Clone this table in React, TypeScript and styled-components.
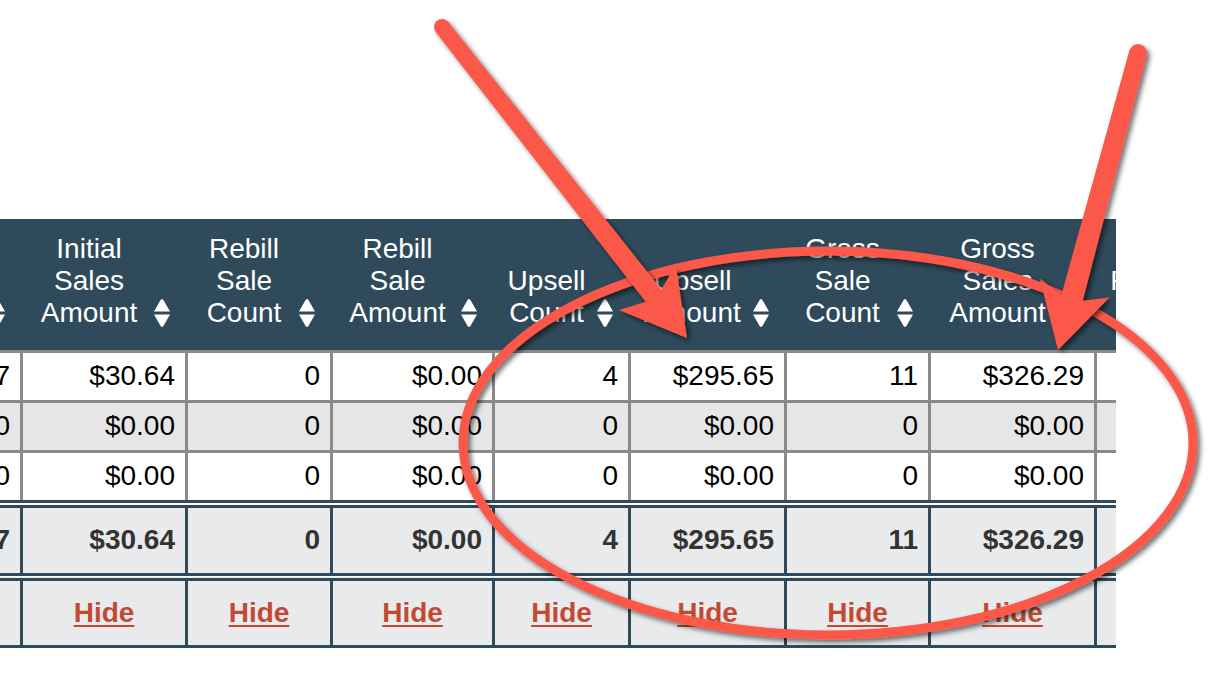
import React from "react";
import styled, { createGlobalStyle } from "styled-components";

const headerBg = "#2f4a5a";
const gridGray = "#8a8a8a";
const markRed = "#fc5848";

const GlobalStyle = createGlobalStyle`
  html, body {
    margin: 0;
    padding: 0;
    background: #ffffff;
  }
  body {
    font-family: "Liberation Sans", Arial, Helvetica, sans-serif;
  }
`;

const Page = styled.div`
  position: relative;
  width: 1216px;
  height: 676px;
  overflow: hidden;
  padding-top: 219px;
  box-sizing: border-box;
`;

const TableClip = styled.div`
  width: 1116px;
  overflow: hidden;
`;

const Table = styled.table`
  table-layout: fixed;
  border-collapse: collapse;
  width: 1344px;
  margin-left: -100px;
  font-size: 28px;
  line-height: 32px;
`;

const HeadCell = styled.th`
  background: ${headerBg};
  color: #ffffff;
  font-weight: normal;
  padding: 14px 15px 21px 5px;
  vertical-align: bottom;
  border: none;
`;

const HeadInner = styled.div`
  display: flex;
  align-items: flex-end;
`;

const HeadLabel = styled.span`
  flex: 1;
  text-align: center;
  white-space: pre-line;
`;

const SortGlyph = styled.svg`
  flex: none;
  display: block;
  width: 20px;
  height: 32px;
`;

const DataRow = styled.tr<{ $alt?: boolean }>`
  background: ${(p) => (p.$alt ? "#e6e6e6" : "#ffffff")};
`;

const DataCell = styled.td`
  border: 3px solid ${gridGray};
  padding: 7px 10px 8px;
  text-align: right;
  color: #000000;
  white-space: nowrap;
  overflow: hidden;
`;

const TotalCell = styled.td`
  background: #e9eaec;
  border-top: 8px double ${headerBg};
  border-left: 3px solid ${headerBg};
  border-right: 3px solid ${headerBg};
  padding: 16px 10px 17px;
  text-align: right;
  font-weight: bold;
  color: #333333;
  white-space: nowrap;
  overflow: hidden;
`;

const FooterCell = styled.td`
  background: #e9eaec;
  border-top: 8px double ${headerBg};
  border-left: 3px solid ${headerBg};
  border-right: 3px solid ${headerBg};
  border-bottom: 3px solid ${headerBg};
  padding: 16px 10px;
  text-align: center;
`;

const HideLink = styled.a`
  color: #c24a33;
  font-weight: bold;
  text-decoration: underline;
  text-decoration-thickness: 2px;
  text-underline-offset: 3px;
  cursor: pointer;
`;

const Overlay = styled.svg`
  position: absolute;
  left: 0;
  top: 0;
  width: 1216px;
  height: 676px;
  pointer-events: none;
`;

const columnWidths = [120, 165, 145, 162, 136, 156, 144, 166, 150];

const headers = [
  "Initial\nSale\nCount",
  "Initial\nSales\nAmount",
  "Rebill\nSale\nCount",
  "Rebill\nSale\nAmount",
  "Upsell\nCount",
  "Upsell\nAmount",
  "Gross\nSale\nCount",
  "Gross\nSales\nAmount",
  "Refund\nCount",
];

const rows = [
  ["17", "$30.64", "0", "$0.00", "4", "$295.65", "11", "$326.29", "0"],
  ["0", "$0.00", "0", "$0.00", "0", "$0.00", "0", "$0.00", "0"],
  ["0", "$0.00", "0", "$0.00", "0", "$0.00", "0", "$0.00", "0"],
];

const totals = ["17", "$30.64", "0", "$0.00", "4", "$295.65", "11", "$326.29", "0"];

const SortIcon = () => (
  <SortGlyph viewBox="0 0 20 32">
    <path d="M10 2 Q11 2 12 4 L18 14.5 L2 14.5 L8 4 Q9 2 10 2 Z" fill="#ffffff" />
    <path d="M2 17.5 L18 17.5 L12 28 Q11 30 10 30 Q9 30 8 28 Z" fill="#ffffff" />
  </SortGlyph>
);

type Pt = [number, number];

// skitch style arrow: round tail, shaft that widens, notched head
const arrowPath = (from: Pt, tip: Pt, w0: number, w1: number) => {
  const dx = tip[0] - from[0];
  const dy = tip[1] - from[1];
  const len = Math.hypot(dx, dy);
  const ux = dx / len;
  const uy = dy / len;
  const nx = -uy;
  const ny = ux;
  const headLen = 64;
  const headHalf = 36;
  const bx = tip[0] - ux * headLen;
  const by = tip[1] - uy * headLen;
  const ex = bx + ux * 10;
  const ey = by + uy * 10;
  const p = (x: number, y: number) => `${x.toFixed(1)} ${y.toFixed(1)}`;
  return [
    `M ${p(from[0] + nx * w0 / 2, from[1] + ny * w0 / 2)}`,
    `L ${p(ex + nx * w1 / 2, ey + ny * w1 / 2)}`,
    `L ${p(bx + nx * headHalf, by + ny * headHalf)}`,
    `L ${p(tip[0], tip[1])}`,
    `L ${p(bx - nx * headHalf, by - ny * headHalf)}`,
    `L ${p(ex - nx * w1 / 2, ey - ny * w1 / 2)}`,
    `L ${p(from[0] - nx * w0 / 2, from[1] - ny * w0 / 2)}`,
    "Z",
  ].join(" ");
};

const Markup = () => (
  <Overlay viewBox="0 0 1216 676">
    <defs>
      <filter id="markShadow" x="-10%" y="-10%" width="120%" height="120%">
        <feDropShadow dx="3" dy="3" stdDeviation="2.5" floodColor="#000000" floodOpacity="0.55" />
      </filter>
    </defs>
    <g filter="url(#markShadow)">
      <ellipse cx="828" cy="443" rx="365" ry="192" fill="none" stroke={markRed} strokeWidth="9" />
    </g>
    <g filter="url(#markShadow)" fill={markRed}>
      <circle cx="442" cy="27" r="8" />
      <path d={arrowPath([442, 27], [687, 338], 16, 20)} />
    </g>
    <g filter="url(#markShadow)" fill={markRed}>
      <circle cx="1138" cy="53" r="9" />
      <path d={arrowPath([1138, 53], [1058, 350], 18, 22)} />
    </g>
  </Overlay>
);

const App = () => {
  return (
    <Page>
      <GlobalStyle />
      <TableClip>
        <Table>
          <colgroup>
            {columnWidths.map((w, i) => (
              <col key={i} style={{ width: w }} />
            ))}
          </colgroup>
          <thead>
            <tr>
              {headers.map((h, i) => (
                <HeadCell key={i}>
                  <HeadInner>
                    <HeadLabel>{h}</HeadLabel>
                    <SortIcon />
                  </HeadInner>
                </HeadCell>
              ))}
            </tr>
          </thead>
          <tbody>
            {rows.map((r, ri) => (
              <DataRow key={ri} $alt={ri === 1}>
                {r.map((v, ci) => (
                  <DataCell key={ci}>{v}</DataCell>
                ))}
              </DataRow>
            ))}
          </tbody>
          <tfoot>
            <tr>
              {totals.map((v, ci) => (
                <TotalCell key={ci}>{v}</TotalCell>
              ))}
            </tr>
            <tr>
              {totals.map((_, ci) => (
                <FooterCell key={ci}>
                  <HideLink>Hide</HideLink>
                </FooterCell>
              ))}
            </tr>
          </tfoot>
        </Table>
      </TableClip>
      <Markup />
    </Page>
  );
};

export default App;
